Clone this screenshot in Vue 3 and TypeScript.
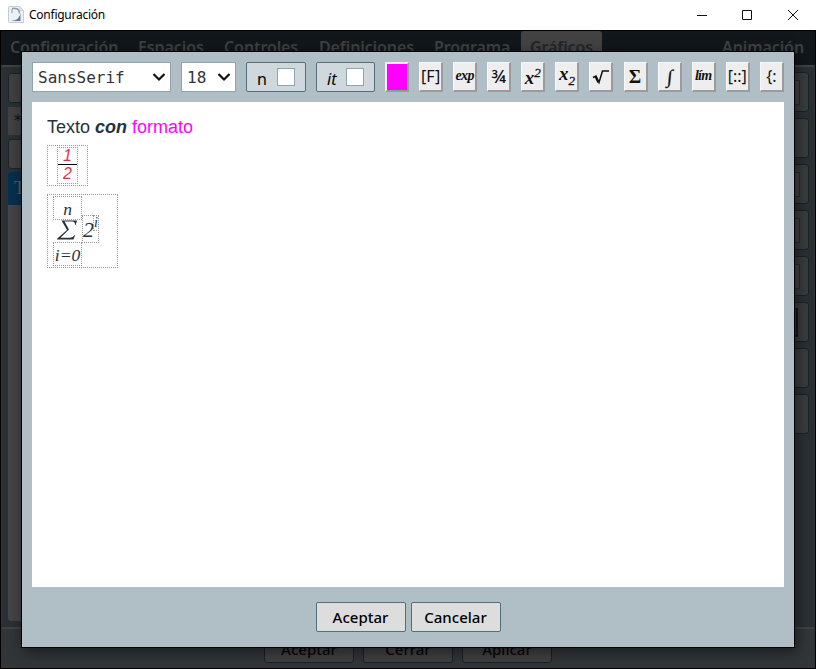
<script setup lang="ts">
type Tool = { label: string; kind: string }

const tabs: { name: string; width: number }[] = [
  { name: 'Configuración', width: 128 },
  { name: 'Espacios', width: 86 },
  { name: 'Controles', width: 95 },
  { name: 'Definiciones', width: 115 },
  { name: 'Programa', width: 95 },
  { name: 'Gráficos', width: 81 },
]

const tools: Tool[] = [
  { label: '', kind: 'color' },
  { label: '[F]', kind: 'sans' },
  { label: 'exp', kind: 'word' },
  { label: '¾', kind: 'fraction' },
  { label: 'x', kind: 'sup' },
  { label: 'x', kind: 'sub' },
  { label: '', kind: 'root' },
  { label: 'Σ', kind: 'sigma' },
  { label: '∫', kind: 'integral' },
  { label: 'lím', kind: 'word' },
  { label: '[::]', kind: 'sans' },
  { label: '{:', kind: 'sans' },
]

const fields = ['box', 'plain', 'box', 'box', 'box', 'dark', 'plain', 'plain']
const footer = ['Aceptar', 'Cerrar', 'Aplicar']
</script>

<template>
  <div class="window">
    <header class="titlebar">
      <svg class="logo" width="16" height="17" viewBox="0 0 16 17">
        <path d="M1 .5h10.500l4 4v12H1.500Q.5 16.500 .5 15.500V1.500Q.5.5 1.500.5z" fill="#edf2f6" stroke="#c3cdd5" />
        <path d="M4 2.500h3q4.500 0 4.500 5" fill="none" stroke="#8b9caf" stroke-width="1.500" />
        <path d="M4 3v4" stroke="#aab7c6" stroke-width="1.500" />
        <path d="M3 15q8.500-.5 9.500-8v8z" fill="#66799a" />
        <path d="M12 1v3.500h3" fill="none" stroke="#c3cdd5" />
      </svg>
      <span class="title">Configuración</span>
      <svg class="controls" width="108" height="12" viewBox="0 0 108 12">
        <path d="M0 6.500h10M45.500 1.500h9v9h-9zM91 1l10 10M101 1L91 11" fill="none" stroke="#111" />
      </svg>
    </header>

    <main class="app">
      <nav class="tabs">
        <span v-for="tab in tabs" :key="tab.name" class="tab" :class="{ active: tab.name === 'Gráficos' }" :style="{ width: tab.width + 'px' }">{{ tab.name }}</span>
        <span class="tab last">Animación</span>
      </nav>
      <section class="panel">
        <div class="list">
          <div class="list-btn"></div>
          <div class="list-field">*</div>
          <div class="list-btn second"></div>
          <div class="list-body"><div class="selected">T</div></div>
        </div>
        <div class="fields">
          <div v-for="(f, i) in fields" :key="i" class="field"><i :class="f"></i></div>
        </div>
      </section>
      <footer class="footer">
        <span v-for="b in footer" :key="b">{{ b }}</span>
      </footer>
    </main>

    <div class="dialog">
      <div class="toolbar">
        <div class="select family"><span>SansSerif</span>
          <svg width="14" height="10" viewBox="0 0 14 10"><path d="M1.500 2l5.500 5.500L12.500 2" /></svg>
        </div>
        <div class="select size"><span>18</span>
          <svg width="14" height="10" viewBox="0 0 14 10"><path d="M1.500 2l5.500 5.500L12.500 2" /></svg>
        </div>
        <label class="check bold"><span>n</span><i></i></label>
        <label class="check italic"><span>it</span><i></i></label>
        <div class="tools">
          <button v-for="(t, i) in tools" :key="i" class="tool" :class="t.kind">
            <svg v-if="t.kind === 'root'" width="18" height="16" viewBox="0 0 18 16">
              <path d="M1 8.500l3-1.500 3 6.500L10.500 2H17" fill="none" stroke="#111" stroke-width="1.500" />
              <path d="M3.500 7.500l3 6" stroke="#111" stroke-width="2.200" />
            </svg>
            <span v-else>{{ t.label }}<sup v-if="t.kind === 'sup'">2</sup><sub v-if="t.kind === 'sub'">2</sub></span>
          </button>
        </div>
      </div>

      <div class="editor">
        <p class="line">Texto <b>con</b> <span class="pink">formato</span></p>
        <div class="formula frac">
          <div class="frac-in"><span>1</span><span class="den">2</span></div>
        </div>
        <div class="formula sum">
          <div class="stack">
            <span class="limit top">n</span>
            <span class="big">
              <svg width="21" height="20" viewBox="0 0 21 20">
                <path d="M4.500.5H20l-1.300 4.500h-.6q.2-3.500-3-3.500H7.500l4.500 8-8.500 8.200h9.500q3.200 0 4.500-2.700h.6L16.500 19.500H0l.3-1L10 10z" />
              </svg>
            </span>
            <span class="limit">i=0</span>
          </div>
          <div class="power">2<span>i</span></div>
        </div>
      </div>

      <div class="actions">
        <button>Aceptar</button>
        <button>Cancelar</button>
      </div>
    </div>
  </div>
</template>

<style>
body { margin: 0; overflow: hidden; }
</style>

<style scoped>
* { box-sizing: border-box; }
.window { width: 816px; height: 669px; position: relative; background: #fff; font-family: "Noto Sans", sans-serif; display: flex; flex-direction: column; }
.titlebar { height: 30px; flex: none; display: flex; align-items: center; padding: 0 6px 1px 8px; }
.title { font: 12px "Noto Sans", sans-serif; letter-spacing: -.25px; margin-left: 5px; color: #000; }
.controls { margin-left: auto; margin-right: 5px; }
.app { flex: 1; border: 1px solid #000; background: #323639; display: flex; flex-direction: column; }
.tabs { height: 34px; flex: none; background: #11171a; display: flex; color: #3f4142; font-weight: 600; font-size: 16px; letter-spacing: -.1px; line-height: 32px; white-space: nowrap; }
.tab { padding-left: 9px; }
.tab.active { background: #434343; color: #222729; border-radius: 3px 3px 0 0; margin-left: 1px; }
.tab.last { margin-left: auto; padding-right: 11px; }
.panel { height: 564px; flex: none; margin: 0 1px; border-top: 2px solid #404244; border-bottom: 2px solid #404244; background: #2a3034; display: flex; justify-content: space-between; }
.list { width: 60px; padding: 6px 0 6px 6px; }
.list-btn { height: 30px; border: 1px solid #1b2529; border-radius: 3px; background: #414141; }
.list-field { height: 28px; margin: 4px 0; background: #424242; padding-left: 5px; color: #111; font: 16px/27px "DejaVu Sans Mono", monospace; }
.list-body { margin-top: 3px; height: 449px; background: #454545; border-radius: 3px; }
.selected { height: 33px; background: #06304f; border-radius: 3px 3px 0 0; color: #565d62; padding-left: 6px; font: 18px/33px "Liberation Serif", serif; }
.fields { width: 70px; padding: 5px 5px 0 0; display: flex; flex-direction: column; gap: 6px; }
.field { height: 40px; border: 1px solid #182327; border-radius: 3px; background: #393d3f; display: flex; align-items: center; justify-content: flex-end; padding-right: 8px; }
.field i { width: 40px; height: 25px; border: 1px solid #242c30; background: #434343; }
.field .plain { visibility: hidden; }
.field .dark { height: 29px; border: 2px solid #141717; margin-right: 2px; background: #343434; }
.footer { flex: 1; display: flex; justify-content: center; gap: 9px; padding-top: 4px; }
.footer span { width: 90px; height: 30px; border: 1px solid #182327; border-radius: 3px; background: #414141; color: #070707; text-align: center; font-size: 15px; font-weight: 500; line-height: 30px; }
.dialog { position: absolute; left: 21px; top: 51px; width: 774px; height: 597px; border: 1px solid #000; background: #b0bec5; box-shadow: 2px 4px 14px rgba(0, 0, 0, .5); padding: 10px; display: flex; flex-direction: column; }
.toolbar { height: 30px; flex: none; display: flex; gap: 10px; }
.select { height: 30px; border: 1px solid #90a4ae; background: #fff; display: flex; align-items: center; justify-content: space-between; padding: 0 5px; font: 16px "DejaVu Sans Mono", monospace; color: #333; }
.select path { fill: none; stroke: #111; stroke-width: 2.200; }
.select svg { margin-right: -1px; }
.family { width: 139px; }
.size { width: 55px; }
.check { width: 60px; height: 30px; border: 1px solid #546e7a; border-radius: 2px; background: #cfd8dc; display: flex; align-items: center; padding: 0 10px; justify-content: space-between; font-size: 16px; color: #000; }
.check span { padding-top: 3px; }
.check i { width: 18px; height: 18px; border: 1px solid #90a4ae; background: #fff; }
.italic { width: 59px; }
.italic span { font-style: italic; }
.tools { flex: 1; display: flex; justify-content: space-between; }
.tool { width: 24px; height: 30px; margin: 0; padding: 0; border: solid; border-width: 1px 2px 2px 1px; border-color: #f8f8f8 #9b9b9b #9b9b9b #f8f8f8; background: #eee; color: #111; display: flex; align-items: center; justify-content: center; line-height: 24px; white-space: nowrap; }
.tool.color { background: #f0f; border-width: 2px; border-color: #eee #999 #999 #eee; }
.sans { font: 400 16px "Noto Sans", sans-serif; }
.sans span { padding-bottom: 1px; }
.word { font: italic bold 14px "Liberation Serif", serif; letter-spacing: -.7px; }
.word span { padding-bottom: 1px; }
.fraction { font: 500 18px "Noto Sans", sans-serif; }
.fraction span { padding-bottom: 2px; }
.sup, .sub { font: italic bold 19px "Liberation Serif", serif; }
.sup span { padding-top: 3px; }
.sub span { padding-bottom: 6px; }
.tool sup, .tool sub { font-size: 13px; line-height: 0; font-weight: 400; -webkit-text-stroke: .3px #111; }
.sigma { font: bold 19px "Liberation Serif", serif; }
.integral { font: italic bold 19px "Liberation Serif", serif; }
.integral span { transform: skewX(-5deg); -webkit-text-stroke: .3px #111; }
.editor { flex: none; height: 485px; margin-top: 10px; padding: 15px; background: #fff; color: #263238; }
.line { margin: 0; height: 20px; font: 18px/20px "Liberation Sans", sans-serif; }
.line b { font-style: italic; }
.pink { color: #f0f; }
.formula { border: 1px dotted #999; display: flex; }
.frac { width: 41px; height: 41px; margin-top: 8px; padding: 1px 9px; }
.frac-in { width: 21px; height: 37px; border: 1px dotted #999; display: flex; flex-direction: column; text-align: center; font: italic 16px/16px "Liberation Sans", sans-serif; color: #dc3545; }
.frac-in span { height: 17px; border-bottom: 1px solid #000; }
.frac-in .den { border: 0; height: 18px; line-height: 18px; }
.sum { width: 71px; height: 74px; margin-top: 8px; padding: 1px 5px; font: italic 16px "Liberation Serif", serif; }
.stack { width: 29px; }
.limit { display: block; height: 24px; border: 1px dotted #999; text-align: center; line-height: 24px; font-size: 17.500px; }
.limit.top { line-height: 25px; }
.big { display: flex; justify-content: center; height: 22px; }
.big path { fill: #263238; }
.power { width: 17px; height: 28px; margin-top: 19px; border: 1px dotted #999; display: flex; font-size: 22px; line-height: 28px; letter-spacing: -1px; }
.power span { width: 6px; height: 16px; flex: none; margin: -1px 0 0 0; border: 1px dotted #999; font-size: 14px; line-height: 13px; letter-spacing: 0; }
.actions { display: flex; justify-content: center; gap: 5px; margin-top: 15px; }
.actions button { width: 90px; height: 30px; border: 1px solid #546e7a; border-radius: 2px; background: #ddd; padding: 0; color: #000; font: 500 15px "Noto Sans", sans-serif; }
</style>
